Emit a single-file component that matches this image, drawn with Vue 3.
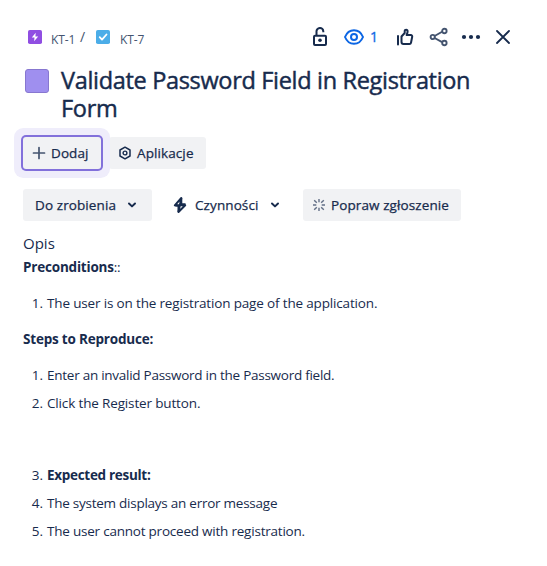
<script setup>
const preconditions = [{ text: 'The user is on the registration page of the application.', fit: -0.16 }]
const steps = [
  { text: 'Enter an invalid Password in the Password field.', fit: -0.26 },
  { text: 'Click the Register button.', fit: -0.15 },
  { text: 'Expected result:', bold: true, gap: true, fit: -0.3 },
  { text: 'The system displays an error message', fit: -0.25 },
  { text: 'The user cannot proceed with registration.', fit: -0.22 },
]
</script>

<template>
  <main class="issue">
    <header class="top">
      <nav class="crumbs">
        <svg class="type" width="14" height="14" viewBox="0 0 14 14"><rect width="14" height="14" rx="1.8" fill="#904ee2" /><path d="M7.7 2.8 3.8 7.5h2.7l-.4 3.7 4.1-4.8H7.4z" fill="#fff" /></svg>
        <span class="key k1">KT-1</span>
        <span class="slash">/</span>
        <svg class="type" width="14" height="14" viewBox="0 0 14 14"><rect width="14" height="14" rx="1.8" fill="#4bade8" /><path d="m3.7 7.2 2.3 2.4 4.5-5.1" fill="none" stroke="#fff" stroke-width="1.8" stroke-linecap="round" stroke-linejoin="round" /></svg>
        <span class="key k2">KT-7</span>
      </nav>
      <div class="tools">
        <svg class="lock" width="16" height="20" viewBox="0 0 16 20" fill="none" stroke="#172b4d" stroke-width="2"><rect x="2" y="8.7" width="12" height="9.4" rx="1" /><path d="M4.5 8.7V4.6a3.4 3.4 0 0 1 6.8-.4v1" /><circle cx="8" cy="13.2" r="1.8" fill="#172b4d" stroke="none" /></svg>
        <svg class="eye" width="20" height="16" viewBox="0 0 20 16" fill="none" stroke="#0c66e4" stroke-width="2"><path d="M1 8c1.8-4.5 5-6.8 9-6.8S17.2 3.5 19 8c-1.8 4.5-5 6.800-9 6.800S2.800 12.500 1 8z" /><circle cx="10" cy="8" r="3" /></svg>
        <span class="count">1</span>
        <svg class="like" width="18" height="18" viewBox="0 0 18 18" fill="none" stroke="#172b4d" stroke-width="2" stroke-linejoin="round"><path d="M2 8v8.500" stroke-linecap="round" /><path d="M5.500 8.500 8.700 5V3.200c0-2 2.900-2.200 2.900.3 0 1.200-.5 2.400-1 3.500h4.200c1 0 1.600.8 1.400 1.700l-1.200 6c-.2.900-.8 1.300-1.600 1.300H7.500c-1.200 0-2-.8-2-2z" /></svg>
        <svg class="share" width="20" height="20" viewBox="0 0 20 20" fill="none" stroke="#44546f" stroke-width="1.900"><path d="m5.600 9 7.500-4.300M5.600 11l7.500 4.200" /><circle cx="3.700" cy="10" r="2.100" /><circle cx="15.400" cy="4" r="2.200" /><circle cx="15.400" cy="16" r="2.200" /></svg>
        <svg class="more" width="20" height="6" viewBox="0 0 20 6" fill="#172b4d"><circle cx="3" cy="3" r="2.100" /><circle cx="10" cy="3" r="2.100" /><circle cx="17" cy="3" r="2.100" /></svg>
        <svg class="close" width="16" height="16" viewBox="0 0 16 16" stroke="#172b4d" stroke-width="1.800" stroke-linecap="round"><path d="m2 2 12 12M14 2 2 14" /></svg>
      </div>
    </header>

    <section class="heading">
      <span class="swatch"></span>
      <h1>Validate Password Field in Registration<br />Form</h1>
    </section>

    <div class="row actions">
      <button class="btn add">
        <svg width="14" height="14" viewBox="0 0 14 14" stroke="#44546f" stroke-width="1.700" stroke-linecap="round"><path d="M7 1.500v11M1.500 7h11" /></svg>
        <span>Dodaj</span>
      </button>
      <button class="btn apps">
        <svg width="14" height="14" viewBox="0 0 14 14" fill="none" stroke="#172b4d" stroke-linejoin="round"><path d="M7 1.200 12 4v6l-5 2.800L2 10V4z" stroke-width="1.500" /><circle cx="7" cy="7" r="1.900" stroke-width="1.400" /></svg>
        <span>Aplikacje</span>
      </button>
    </div>

    <div class="row status">
      <button class="btn todo">
        <span>Do zrobienia</span>
        <svg width="10" height="8" viewBox="0 0 10 8" fill="none" stroke="#172b4d" stroke-width="2" stroke-linecap="round" stroke-linejoin="round"><path d="M2 2.500 5 5.400l3-2.900" /></svg>
      </button>
      <button class="btn act">
        <svg class="bolt" width="14" height="18" viewBox="0 0 14 18" fill="none" stroke="#172b4d" stroke-width="2" stroke-linejoin="round"><path d="M8.300 2 1.800 9.300h10.400L5.500 16z" /><path d="M8.300 2v6l4.200.300M5.500 16V10L2 9.300" /></svg>
        <span>Czynności</span>
        <svg width="10" height="8" viewBox="0 0 10 8" fill="none" stroke="#172b4d" stroke-width="2" stroke-linecap="round" stroke-linejoin="round"><path d="M2 2.500 5 5.400l3-2.900" /></svg>
      </button>
      <button class="btn improve">
        <svg width="14" height="14" viewBox="0 0 14 14" stroke="#626f86" stroke-width="1.400"><path d="M7 1v3.300M7 9.700V13M1 7h3.300M9.700 7H13M2.200 2.200l2.600 2.600M9.200 9.200l2.600 2.600M11.800 2.200 9.200 4.800M4.800 9.200l-2.600 2.600" /></svg>
        <span>Popraw zgłoszenie</span>
      </button>
    </div>

    <article class="body">
      <h2>Opis</h2>
      <p><strong>Preconditions</strong>::</p>
      <ol>
        <li v-for="(s, i) in preconditions" :key="s.text">
          <span class="num">{{ i + 1 }}.</span><span :style="{ letterSpacing: s.fit + 'px' }">{{ s.text }}</span>
        </li>
      </ol>
      <p><strong>Steps to Reproduce:</strong></p>
      <ol>
        <li v-for="(s, i) in steps" :key="s.text" :class="{ gap: s.gap }">
          <span class="num">{{ i + 1 }}.</span><component :is="s.bold ? 'strong' : 'span'" :style="{ letterSpacing: s.fit + 'px' }">{{ s.text }}</component>
        </li>
      </ol>
    </article>
  </main>
</template>

<style>
body { background: #fff; }
</style>

<style scoped>
.issue { box-sizing: border-box; width: 547px; height: 566px; padding: 21px 0 0 23px; overflow: hidden; color: #172b4d; font: 400 13.5px/20px "Open Sans", "Noto Sans", sans-serif; }
svg { display: block; flex: none; }
.top { display: flex; height: 32px; align-items: center; }
.crumbs { display: flex; align-items: center; width: 288px; padding-left: 5px; box-sizing: border-box; }
.key { color: #44546f; font-size: 12px; line-height: 16px; padding-top: 5px; letter-spacing: -0.1px; }
.k1 { margin-left: 9px; width: 25px; }
.slash { width: 6px; margin: 0 10px 0 4px; color: #44546f; font-size: 14px; }
.k2 { margin-left: 10px; }
.tools { display: flex; align-items: center; }
.lock { margin-left: 1px; }
.eye { margin-left: 16px; }
.count { margin-left: 6px; width: 8px; color: #0c66e4; font-size: 14px; -webkit-text-stroke: 0.3px #0c66e4; }
.like { margin-left: 18px; }
.share { margin-left: 15px; }
.more { margin-left: 12px; }
.close { margin-left: 14px; }
.heading { display: flex; height: 56px; margin-top: 14px; }
.swatch { box-sizing: border-box; width: 24px; height: 24px; margin: 2px 12px 0 2px; border: 1px solid #8777d0; border-radius: 3px; background: #9f8fef; flex: none; }
h1 { margin: -1px 0 0; font-size: 23.5px; line-height: 28px; font-weight: 400; white-space: nowrap; letter-spacing: -0.32px; -webkit-text-stroke: 0.45px #172b4d; }
.row { display: flex; height: 32px; }
.actions { margin-top: 14px; }
.status { margin-top: 20px; }
.btn { display: flex; align-items: center; box-sizing: border-box; height: 32px; margin: 0; padding: 0; border: 0; border-radius: 3px; background: #f1f2f4; color: #172b4d; font: 400 13.5px/20px "Open Sans", "Noto Sans", sans-serif; white-space: nowrap; letter-spacing: 0.1px; -webkit-text-stroke: 0.25px #172b4d; }
.add { position: relative; width: 78px; padding-left: 9px; gap: 5px; box-shadow: 0 0 0 2px #8270db, 0 0 0 9px #efedfb; }
.apps { width: 97px; margin-left: 8px; padding-left: 9px; gap: 5px; }
.todo { width: 129px; padding: 0 15px 0 12px; justify-content: space-between; }
.act { width: 128px; margin-left: 12px; padding: 0 12px 0 9px; background: none; }
.act span { margin-left: 8px; flex: 1; text-align: left; }
.improve { width: 158px; margin-left: 11px; padding-left: 9px; gap: 5px; }
.body { padding-top: 12px; }
h2 { margin: 0; font-size: 15px; line-height: 20px; font-weight: 400; }
p { margin: 4px 0 0; height: 20px; letter-spacing: -0.2px; }
strong { font-weight: 700; }
ol { list-style: none; margin: 16px 0; padding: 0; }
ol + p { margin: 0; }
li { display: flex; height: 20px; margin-top: 8px; white-space: nowrap; }
li:first-child { margin-top: 0; }
li.gap { margin-top: 52px; }
.num { width: 20px; margin-right: 4px; text-align: right; }
</style>
